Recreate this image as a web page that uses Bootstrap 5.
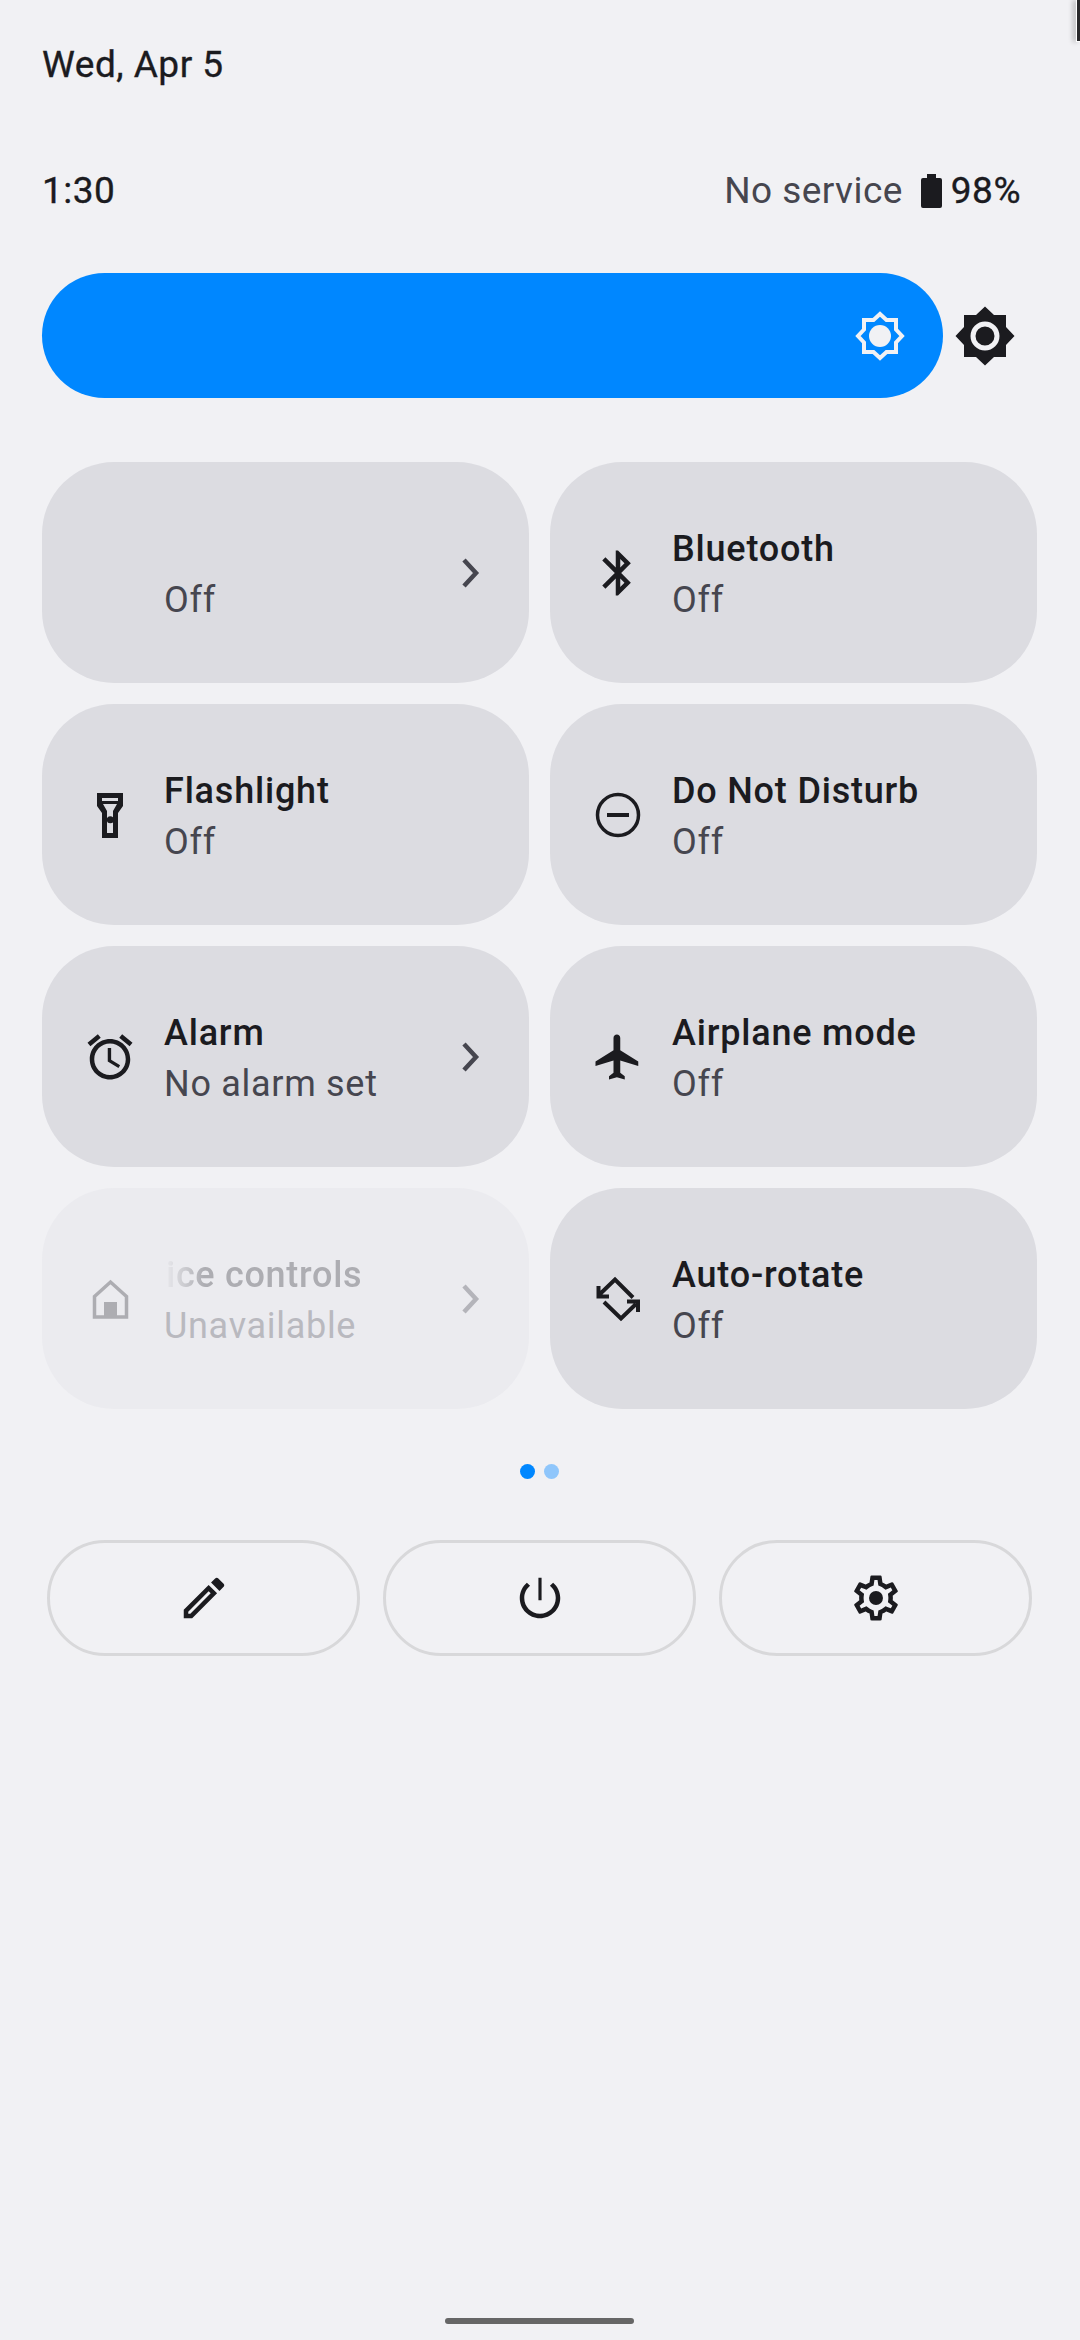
<!DOCTYPE html>
<html lang="en">
<head>
<meta charset="utf-8">
<title>Quick settings</title>
<link rel="stylesheet" href="https://cdn.jsdelivr.net/npm/bootstrap@5.3.0/dist/css/bootstrap.min.css">
<style>
html,body{margin:0;background:#f1f1f4;}
body{font-family:Roboto,"Liberation Sans",sans-serif;color:#1b1b1f;}
.shade{position:relative;width:1080px;height:2340px;overflow:hidden;padding:0 43px 0 42px;background:#f1f1f4;}
.date-line{height:60px;margin-top:35px;font-size:37px;line-height:60px;font-weight:400;letter-spacing:.5px;-webkit-text-stroke:.35px #1b1b1f;}
.status-line{height:60px;margin-top:66px;padding-right:16px;font-size:37px;line-height:60px;letter-spacing:.5px;font-weight:400;-webkit-text-stroke:.35px #1b1b1f;}
.no-svc{color:#46464f;letter-spacing:.45px;-webkit-text-stroke:0;}
.batt{width:21px;height:34px;margin:0 9px 0 18px;display:block;}
.bright-row{height:125px;margin-top:52px;width:995px;}
.bright-track{width:901px;height:125px;border-radius:63px;background:#0087ff;padding-right:36px;}
.bright-out{margin-left:12px;}
.tile-grid{--bs-gutter-x:21px;--bs-gutter-y:21px;margin-top:43px;}
.tile{height:221px;border-radius:72px;background:#dcdce1;padding-left:41px;padding-right:46px;}
.tile-ico{width:54px;height:54px;flex:none;color:#1b1b1f;display:block;}
.tile-txt{margin-left:27px;padding-top:2px;flex:1 1 auto;min-width:0;}
.tile-ttl{height:50px;font-size:36px;line-height:50px;font-weight:500;letter-spacing:.8px;white-space:nowrap;}
.tile-sub{height:50px;font-size:36px;line-height:53px;letter-spacing:.7px;color:#46464f;white-space:nowrap;}
.chev{width:24px;height:32px;flex:none;color:#46464f;display:block;}
.tile-off{background:#ebebef;}
.tile-off .tile-ico{color:#adadb2;}
.tile-off .tile-ttl{color:#adadb2;letter-spacing:.7px;padding-left:2px;-webkit-mask-image:linear-gradient(90deg,transparent 0,#000 40px);mask-image:linear-gradient(90deg,transparent 0,#000 40px);}
.tile-off .tile-sub{color:#b9b9bf;}
.tile-off .chev{color:#b4b4ba;}
.pager{height:15px;margin-top:55px;gap:9px;}
.pip{width:15px;height:15px;border-radius:50%;background:#0087ff;}
.pip-dim{background:#8fc6fb;}
.foot-row{margin-top:61px;padding:0 5px;gap:23px;}
.foot-btn{width:313px;height:116px;border:3px solid #d8d8da;border-radius:58px;background:transparent;padding:0;color:#1b1b1f;}
.foot-ico{width:54px;height:54px;display:block;}
.home-bar{position:absolute;left:445px;top:2318px;width:189px;height:6px;border-radius:3px;background:#666;}
.edge-mark{position:absolute;right:0;top:0;width:4px;height:42px;background:#2a2a2c;border-left:1px solid #fff;border-bottom:1px solid #fff;box-shadow:-3px 0 5px rgba(0,0,0,.25);}
</style>
</head>
<body>
<div class="shade">
  <div class="date-line">Wed, Apr 5</div>
  <div class="status-line d-flex align-items-center justify-content-between">
    <span>1:30</span>
    <span class="d-flex align-items-center">
      <span class="no-svc">No service</span>
      <svg class="batt" viewBox="0 0 21 34"><path fill="#1b1b1f" d="M6 0h9v4h4a2 2 0 0 1 2 2v26a2 2 0 0 1-2 2H2a2 2 0 0 1-2-2V6a2 2 0 0 1 2-2h4z"/></svg>
      <span>98%</span>
    </span>
  </div>
  <div class="bright-row d-flex align-items-center">
    <div class="bright-track d-flex align-items-center justify-content-end">
      <svg width="54" height="54" viewBox="-27 -27 54 54"><path fill="none" stroke="#f1f1f4" stroke-width="4" d="M0-22 6.500-16H16V-6.500L22 0 16 6.500V16H6.500L0 22-6.500 16H-16V6.500L-22 0-16-6.500V-16H-6.500Z"/><circle r="11" fill="#f1f1f4"/></svg>
    </div>
    <svg class="bright-out" width="60" height="60" viewBox="-30 -30 60 60"><path fill="#1b1b1f" d="M0-29.500 9-21H21V-9L29.500 0 21 9V21H9L0 29.500-9 21H-21V9L-29.500 0-21-9V-21H-9Z"/><circle r="12" fill="none" stroke="#f1f1f4" stroke-width="5"/></svg>
  </div>

  <div class="row tile-grid">
    <div class="col-6">
      <div class="tile d-flex align-items-center">
        <span class="tile-ico"></span>
        <div class="tile-txt"><div class="tile-ttl"></div><div class="tile-sub">Off</div></div>
        <svg class="chev" viewBox="0 0 24 32"><path fill="none" stroke="currentColor" stroke-width="4.500" d="M5 3l12 13L5 29"/></svg>
      </div>
    </div>
    <div class="col-6">
      <div class="tile d-flex align-items-center">
        <svg class="tile-ico" viewBox="0 0 24 24"><path fill="currentColor" d="M17.710 7.710L12 2h-1v7.590L6.410 5 5 6.410 10.590 12 5 17.590 6.410 19 11 14.410V22h1l5.710-5.710-4.300-4.290 4.300-4.290zM13 5.830l1.880 1.880L13 9.590V5.830zm1.880 10.460L13 18.170v-3.760l1.880 1.880z"/></svg>
        <div class="tile-txt"><div class="tile-ttl">Bluetooth</div><div class="tile-sub">Off</div></div>
      </div>
    </div>
    <div class="col-6">
      <div class="tile d-flex align-items-center">
        <svg class="tile-ico" viewBox="0 0 54 54"><path fill="currentColor" fill-rule="evenodd" d="M14 5H40V18L35 25V50H19V25L14 18ZM19 10V13H35V10ZM20 16 24 23V45H30V23L34 16Z"/><circle cx="27.300" cy="31.700" r="3.500" fill="currentColor"/></svg>
        <div class="tile-txt"><div class="tile-ttl">Flashlight</div><div class="tile-sub">Off</div></div>
      </div>
    </div>
    <div class="col-6">
      <div class="tile d-flex align-items-center">
        <svg class="tile-ico" viewBox="0 0 54 54"><circle cx="27" cy="27" r="20.500" fill="none" stroke="currentColor" stroke-width="3.500"/><rect x="16" y="25" width="22" height="4" fill="currentColor"/></svg>
        <div class="tile-txt"><div class="tile-ttl">Do Not Disturb</div><div class="tile-sub">Off</div></div>
      </div>
    </div>
    <div class="col-6">
      <div class="tile d-flex align-items-center">
        <svg class="tile-ico" viewBox="0 0 24 24"><path fill="currentColor" d="M22 5.720l-4.600-3.860-1.290 1.530 4.600 3.860L22 5.720zM7.880 3.390L6.600 1.860 2 5.710l1.290 1.530 4.590-3.850zM12.500 8H11v6l4.750 2.850.75-1.230-4-2.370V8zM12 4c-4.970 0-9 4.030-9 9s4.030 9 9 9 9-4.030 9-9-4.030-9-9-9zm0 16c-3.870 0-7-3.130-7-7s3.130-7 7-7 7 3.130 7 7-3.130 7-7 7z"/></svg>
        <div class="tile-txt"><div class="tile-ttl">Alarm</div><div class="tile-sub">No alarm set</div></div>
        <svg class="chev" viewBox="0 0 24 32"><path fill="none" stroke="currentColor" stroke-width="4.500" d="M5 3l12 13L5 29"/></svg>
      </div>
    </div>
    <div class="col-6">
      <div class="tile d-flex align-items-center">
        <svg class="tile-ico" viewBox="0 0 24 24"><path fill="currentColor" d="M21 16v-2l-8-5V3.500c0-.83-.67-1.500-1.500-1.500S10 2.670 10 3.500V9l-8 5v2l8-2.500V19l-2 1.500V22l3.500-1 3.500 1v-1.500L13 19v-5.500l8 2.500z"/></svg>
        <div class="tile-txt"><div class="tile-ttl">Airplane mode</div><div class="tile-sub">Off</div></div>
      </div>
    </div>
    <div class="col-6">
      <div class="tile tile-off d-flex align-items-center">
        <svg class="tile-ico" viewBox="0 0 54 54"><path fill="none" stroke="currentColor" stroke-width="3.500" d="M11.500 45V24.500L27.500 10 43.500 24.500V45Z"/><rect x="21" y="30" width="13" height="16" fill="currentColor"/></svg>
        <div class="tile-txt"><div class="tile-ttl">ice controls</div><div class="tile-sub">Unavailable</div></div>
        <svg class="chev" viewBox="0 0 24 32"><path fill="none" stroke="currentColor" stroke-width="4.500" d="M5 3l12 13L5 29"/></svg>
      </div>
    </div>
    <div class="col-6">
      <div class="tile d-flex align-items-center">
        <svg class="tile-ico" viewBox="0 0 54 54"><path fill="none" stroke="currentColor" stroke-width="4" d="M9 22 24 7.500 42 25.500M45 32 30 46.500 13 30M7.500 14V24.500H18M36 29.500H47V40"/></svg>
        <div class="tile-txt"><div class="tile-ttl">Auto-rotate</div><div class="tile-sub">Off</div></div>
      </div>
    </div>
  </div>

  <div class="pager d-flex justify-content-center">
    <span class="pip"></span><span class="pip pip-dim"></span>
  </div>

  <div class="foot-row d-flex">
    <button type="button" class="btn foot-btn d-flex align-items-center justify-content-center" aria-label="Edit">
      <svg class="foot-ico" viewBox="0 0 24 24"><path fill="currentColor" d="M14.060 9.020l.92.92L5.920 19H5v-.92l9.060-9.060M17.660 3c-.25 0-.51.1-.7.29l-1.830 1.830 3.750 3.750 1.830-1.830c.39-.39.39-1.020 0-1.410l-2.340-2.340c-.2-.2-.45-.29-.71-.29zm-3.600 3.190L3 17.250V21h3.750L17.810 9.940l-3.750-3.750z"/></svg>
    </button>
    <button type="button" class="btn foot-btn d-flex align-items-center justify-content-center" aria-label="Power">
      <svg class="foot-ico" viewBox="0 0 24 24"><path fill="currentColor" d="M12.700 3h-1.400v10h1.400V3zm5.130 2.170l-1.420 1.420C17.990 7.860 19 9.810 19 12c0 3.870-3.130 7-7 7s-7-3.130-7-7c0-2.190 1.010-4.140 2.580-5.420L6.170 5.170C4.230 6.820 3 9.260 3 12c0 4.970 4.030 9 9 9s9-4.030 9-9c0-2.740-1.230-5.180-3.170-6.830z"/></svg>
    </button>
    <button type="button" class="btn foot-btn d-flex align-items-center justify-content-center" aria-label="Settings">
      <svg class="foot-ico" viewBox="0 0 24 24"><path fill="currentColor" d="M19.430 12.980c.04-.32.07-.64.07-.98 0-.34-.03-.66-.07-.98l2.110-1.650c.19-.15.24-.42.12-.64l-2-3.460c-.09-.16-.26-.25-.44-.25-.06 0-.12.01-.17.03l-2.490 1c-.52-.4-1.080-.73-1.690-.98l-.38-2.650C14.460 2.180 14.250 2 14 2h-4c-.25 0-.46.18-.49.42l-.38 2.650c-.61.25-1.170.59-1.690.98l-2.490-1c-.06-.02-.12-.03-.18-.03-.17 0-.34.09-.43.25l-2 3.460c-.13.22-.07.49.12.64l2.110 1.650c-.04.32-.07.65-.07.98 0 .33.03.66.07.98l-2.110 1.650c-.19.15-.24.42-.12.64l2 3.460c.09.16.26.25.44.25.06 0 .12-.01.17-.03l2.490-1c.52.4 1.080.73 1.690.98l.38 2.650c.03.24.24.42.49.42h4c.25 0 .46-.18.49-.42l.38-2.650c.61-.25 1.170-.59 1.690-.98l2.490 1c.06.02.12.03.18.03.17 0 .34-.09.43-.25l2-3.460c.12-.22.07-.49-.12-.64l-2.110-1.650zm-1.980-1.710c.04.31.05.52.05.73 0 .21-.02.43-.05.73l-.14 1.130.89.7 1.080.84-.7 1.210-1.270-.51-1.040-.42-.9.68c-.43.32-.84.56-1.250.73l-1.060.43-.16 1.130-.2 1.350h-1.400l-.19-1.350-.16-1.130-1.060-.43c-.43-.18-.83-.41-1.230-.71l-.91-.7-1.060.43-1.270.51-.7-1.210 1.080-.84.89-.7-.14-1.130c-.03-.31-.05-.54-.05-.74s.02-.43.05-.73l.14-1.130-.89-.7-1.080-.84.7-1.210 1.270.51 1.040.42.9-.68c.43-.32.84-.56 1.250-.73l1.060-.43.16-1.130.2-1.350h1.390l.19 1.350.16 1.130 1.060.43c.43.18.83.41 1.230.71l.91.7 1.060-.43 1.270-.51.7 1.210-1.070.85-.89.7.14 1.130z"/><circle cx="12" cy="12" r="3.100" fill="currentColor"/></svg>
    </button>
  </div>

  <div class="home-bar"></div>
  <div class="edge-mark"></div>
</div>
<script src="https://cdn.jsdelivr.net/npm/bootstrap@5.3.0/dist/js/bootstrap.bundle.min.js"></script>
</body>
</html>
